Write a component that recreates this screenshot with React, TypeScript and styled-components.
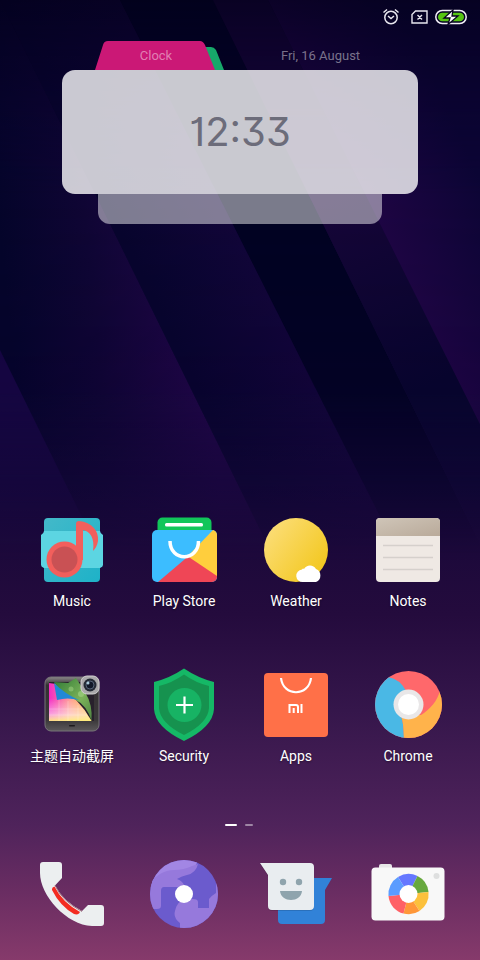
import React from "react";
import styled, { createGlobalStyle } from "styled-components";

const GlobalStyle = createGlobalStyle`
  *, *::before, *::after { box-sizing: border-box; }
  body { margin: 0; background: #05021f; font-family: Roboto, "Noto Sans CJK SC", sans-serif; }
  button { margin: 0; padding: 0; border: 0; background: none; color: inherit; font: inherit; cursor: pointer; }
`;

const Screen = styled.div`
  position: relative;
  isolation: isolate;
  display: flex;
  flex-direction: column;
  min-height: 100vh;
  overflow: hidden;
  color: #fff;
`;

const WallpaperArt = styled.svg`
  position: absolute;
  inset: 0;
  z-index: -1;
  width: 100%;
  height: 100%;
`;

const StatusBar = styled.header`
  display: flex;
  align-items: center;
  justify-content: flex-end;
  gap: 7px;
  height: 33px;
  padding: 0 13px;
  svg { display: block; }
`;

const Widget = styled.section`
  display: flex;
  flex-direction: column;
  padding: 8px 62px 0;
`;

const Tabs = styled.div`
  display: flex;
  height: 29px;
  padding: 0 32px;
`;

const ClockTab = styled.button`
  position: relative;
  isolation: isolate;
  width: 130px;
  padding-right: 6px;
  color: rgba(255, 255, 255, 0.45);
  font-size: 13px;
  svg { position: absolute; inset: 0; z-index: -1; }
`;

const DateLabel = styled.div`
  flex: 1;
  align-self: center;
  padding-left: 31px;
  text-align: center;
  white-space: nowrap;
  font-size: 13px;
  color: rgba(255, 255, 255, 0.45);
`;

const ClockCard = styled.div`
  display: grid;
  place-items: center;
  height: 124px;
  border-radius: 13px;
  background: rgba(255, 255, 255, 0.79);
`;

const Time = styled.time`
  color: #6c6c7a;
  font-family: Inter, sans-serif;
  font-size: 40px;
  line-height: 48px;
  font-feature-settings: "cv09", "cv01";
`;

const CardShelf = styled.div`
  height: 30px;
  margin: 0 36px;
  border-radius: 0 0 12px 12px;
  background: rgba(255, 255, 255, 0.48);
`;

const AppGrid = styled.main`
  display: grid;
  grid-template-columns: repeat(4, 1fr);
  row-gap: 52px;
  margin-top: auto;
  padding: 0 16px;
`;

const AppButton = styled.button`
  display: flex;
  flex-direction: column;
  align-items: center;
  gap: 1px;
  svg { display: block; overflow: visible; }
`;

const AppLabel = styled.span`
  height: 22px;
  line-height: 20px;
  font-size: 14px;
  white-space: nowrap;
  text-shadow: 0 1px 2px rgba(0, 0, 0, 0.4);
`;

const Pager = styled.nav`
  display: flex;
  justify-content: center;
  align-items: center;
  gap: 8px;
  height: 10px;
  margin-top: 52px;
  padding-right: 2px;
`;

const PageMark = styled.button<{ $active?: boolean }>`
  width: ${(p) => (p.$active ? 12 : 8)}px;
  height: 2px;
  border-radius: 1px;
  background: ${(p) => (p.$active ? "#fff" : "rgba(255,255,255,0.45)")};
`;

const Dock = styled.footer`
  display: grid;
  grid-template-columns: repeat(4, 1fr);
  padding: 24px 16px 26px;
`;

const Wallpaper = () => (
  <WallpaperArt viewBox="0 0 480 960" preserveAspectRatio="none" aria-hidden="true">
    <defs>
      <linearGradient id="sky" x1="0" y1="0" x2="0" y2="1">
        <stop offset="0" stopColor="#03001b" />
        <stop offset="0.2" stopColor="#0a0330" />
        <stop offset="0.5" stopColor="#140738" />
        <stop offset="0.64" stopColor="#240b3d" />
        <stop offset="0.74" stopColor="#35164b" />
        <stop offset="0.86" stopColor="#4f235b" />
        <stop offset="0.93" stopColor="#6a2d62" />
        <stop offset="1" stopColor="#863a6b" />
      </linearGradient>
      <linearGradient id="fade" x1="0" y1="0" x2="0" y2="1">
        <stop offset="0" stopColor="#fff" stopOpacity="0.3" />
        <stop offset="0.35" stopColor="#fff" />
        <stop offset="0.7" stopColor="#fff" stopOpacity="0.85" />
        <stop offset="1" stopColor="#fff" stopOpacity="0" />
      </linearGradient>
      <linearGradient id="violet" gradientUnits="userSpaceOnUse" x1="10" y1="330" x2="200" y2="310">
        <stop offset="0" stopColor="#04042a" />
        <stop offset="0.45" stopColor="#0f0534" />
        <stop offset="1" stopColor="#210648" />
      </linearGradient>
      <linearGradient id="indigo" gradientUnits="userSpaceOnUse" x1="170" y1="330" x2="270" y2="280">
        <stop offset="0" stopColor="#07042d" />
        <stop offset="1" stopColor="#120539" />
      </linearGradient>
      <linearGradient id="narrow" gradientUnits="userSpaceOnUse" x1="300" y1="200" x2="400" y2="400">
        <stop offset="0" stopColor="#180539" />
        <stop offset="1" stopColor="#06052c" />
      </linearGradient>
      <linearGradient id="edge" gradientUnits="userSpaceOnUse" x1="370" y1="230" x2="480" y2="180">
        <stop offset="0" stopColor="#200545" />
        <stop offset="1" stopColor="#0c0535" />
      </linearGradient>
      <mask id="rays"><rect width="480" height="560" fill="url(#fade)" /></mask>
    </defs>
    <rect width="480" height="960" fill="url(#sky)" />
    <g mask="url(#rays)">
      <path d="M0 0L275 560H0z" fill="url(#violet)" />
      <path d="M0 350L103 560H0z" fill="#160643" />
      <path d="M0 0H120L402 560H275z" fill="url(#indigo)" />
      <path d="M120 0H213L488 560H402z" fill="#010222" />
      <path d="M213 0H268L480 424V560H488z" fill="url(#narrow)" />
      <path d="M268 0H480V424z" fill="url(#edge)" />
    </g>
  </WallpaperArt>
);

const Svg = ({ children }: { children: React.ReactNode }) => (
  <svg width="80" height="80" viewBox="0 0 80 80" aria-hidden="true">{children}</svg>
);

const MusicIcon = () => (
  <Svg>
    <defs><linearGradient id="mu" x2="1" y2="1"><stop stopColor="#43b9c9" /><stop offset="1" stopColor="#1eb2c8" /></linearGradient></defs>
    <rect x="12" y="8" width="56" height="64" rx="4" fill="url(#mu)" />
    <path d="M12 21H68Q68 23 71 25V55Q71 57 68 58H12Q9 57 9 55V25Q12 23 12 21z" fill="#5cd5e2" />
    <circle cx="32.500" cy="49.500" r="18" fill="#f25f5c" />
    <path d="M44 50V14Q44 11 47 11C60 12 67 21 66 31Q65 37 61 41C63 28 58 21 51 20V50z" fill="#f25f5c" />
    <circle cx="32.500" cy="49.500" r="13" fill="#c95154" />
  </Svg>
);

const PlayIcon = () => (
  <Svg>
    <defs><clipPath id="bag"><rect x="8" y="20" width="65" height="52" rx="5" /></clipPath></defs>
    <rect x="13.500" y="7.500" width="54" height="30" rx="5" fill="#11c65a" />
    <rect x="21" y="13" width="38" height="3.500" rx="1.500" fill="#fff" />
    <g clipPath="url(#bag)">
      <path d="M8 20H73V72H8z" fill="#3cbdff" />
      <path d="M69 20H73V67L43 47z" fill="#ffce3d" />
      <path d="M44 46.500L73 66V72H14z" fill="#ef4656" />
    </g>
    <path d="M26 31C26 52 54.500 52 54.500 31" fill="none" stroke="#fff" strokeWidth="3.500" />
  </Svg>
);

const WeatherIcon = () => (
  <Svg>
    <defs><linearGradient id="sun" x1="0.1" y1="0.2" x2="0.9" y2="0.8"><stop stopColor="#fbdc72" /><stop offset="1" stopColor="#f3c821" /></linearGradient></defs>
    <circle cx="40" cy="40" r="32" fill="url(#sun)" />
    <path d="M47 72A6 6 0 0 1 46 59.500Q47 58 48 59A7 7 0 0 1 60 59A7 7 0 0 1 60 72z" fill="#fff" />
  </Svg>
);

const NotesIcon = () => (
  <Svg>
    <defs>
      <clipPath id="pad"><rect x="8" y="8" width="64" height="64" rx="4" /></clipPath>
      <linearGradient id="nh" x2="1" y2="1"><stop stopColor="#cfc5b8" /><stop offset="1" stopColor="#b9aa9a" /></linearGradient>
    </defs>
    <g clipPath="url(#pad)"><path d="M8 8H72V72H8z" fill="#efe9e4" /><path d="M8 8H72V26H8z" fill="url(#nh)" /></g>
    <path d="M15 35.500H65M15 47.500H65M15 59.500H65" stroke="#d5d0cc" strokeWidth="1.300" />
  </Svg>
);

const ThemeIcon = () => (
  <Svg>
    <defs>
      <linearGradient id="rb" x2="1" y2="0"><stop stopColor="#f32ac5" /><stop offset="0.5" stopColor="#ff9c91" /><stop offset="1" stopColor="#ffc23c" /></linearGradient>
      <linearGradient id="lt" x2="0" y2="1"><stop offset="0.4" stopColor="#fff" stopOpacity="0" /><stop offset="0.8" stopColor="#fff" stopOpacity="0.5" /><stop offset="1" stopColor="#fff27a" stopOpacity="0.9" /></linearGradient>
      <linearGradient id="lf" x1="0" y1="0" x2="1" y2="1"><stop stopColor="#2f7a35" /><stop offset="0.6" stopColor="#7cb35a" /><stop offset="1" stopColor="#4b8140" /></linearGradient>
      <linearGradient id="fr" x2="0" y2="1"><stop stopColor="#8a8788" /><stop offset="0.15" stopColor="#343033" /><stop offset="0.8" stopColor="#3b383a" /><stop offset="1" stopColor="#5c595b" /></linearGradient>
    </defs>
    <rect x="13" y="12" width="54" height="54" rx="6" fill="url(#fr)" stroke="#777478" />
    <path d="M17 17H62V56H17z" fill="#28212c" />
    <path d="M17 18L24 19Q47 33 59.500 56H17z" fill="url(#rb)" />
    <path d="M17 18L24 19Q47 33 59.500 56H17z" fill="url(#lt)" />
    <path d="M17 44H51M17 50H55M27 34V56M36 36V56M46 40V56" stroke="#fff" strokeWidth="0.700" opacity="0.3" />
    <path d="M22 17L36 18L44 13L53 27Q61 40 59.500 56Q55 40 42 34L30 30z" fill="url(#lf)" />
    <path d="M22 18Q33 29 47 35Q35 32 25 35Z" fill="#2188d6" />
    <circle cx="49" cy="29" r="3" fill="#a5d685" opacity="0.6" /><circle cx="39" cy="24" r="2.500" fill="#a5d685" opacity="0.5" />
    <rect x="49" y="11" width="18" height="18" rx="6" fill="#aaa9ab" stroke="#d2d1d2" />
    <circle cx="58" cy="20" r="6.500" fill="#242a35" /><circle cx="58" cy="20" r="4" fill="#111828" stroke="#536175" />
    <circle cx="56" cy="18" r="1.500" fill="#a8c9d8" /><rect x="37" y="60" width="6" height="1.500" rx="0.700" fill="#1d1a1d" />
  </Svg>
);

const SecurityIcon = () => (
  <Svg>
    <path d="M40 3.500Q54 13 70 17V44Q69 62 40 76Q11 62 10 44V17Q26 13 40 3.500z" fill="#15b866" />
    <path d="M40 9.500Q52 18 65 21V43Q64 58 40 70Q16 58 15 43V21Q28 18 40 9.500z" fill="#16924f" />
    <circle cx="40.500" cy="40" r="17" fill="#17b364" />
    <path d="M32 40H49M40.500 31.500V48.500" stroke="#fff" strokeWidth="2.200" />
  </Svg>
);

const AppsIcon = () => (
  <Svg>
    <rect x="8" y="8" width="64" height="64" rx="4" fill="#ff7048" />
    <path d="M25 13C27 32 53 32 55 13" fill="none" stroke="#fff" strokeWidth="2.200" />
    <path d="M33.500 48V40H40Q42 40 42 42V48M37.700 43V48M45.500 39V48" fill="none" stroke="#fff" strokeWidth="2" />
  </Svg>
);

const ChromeIcon = () => (
  <Svg>
    <defs><clipPath id="chr"><circle cx="40.500" cy="39.500" r="33.500" /></clipPath></defs>
    <g clipPath="url(#chr)">
      <path d="M0 0H80V80H0z" fill="#ff686b" />
      <path d="M20 12Q32 14 38 26V50L33.500 52Q36 60 36 80H0V0z" fill="#4ab8e5" />
      <path d="M72 25C70 36 61 45 53 50L40 50L33.500 52Q36 60 36 80H80V25z" fill="#ffb34b" />
    </g>
    <circle cx="40.500" cy="39.500" r="15" fill="#e9e7e8" /><circle cx="40.500" cy="39.500" r="10.500" fill="#fff" />
  </Svg>
);

const PhoneIcon = () => (
  <Svg>
    <path d="M11 8H27Q30 8 30 11V24L23 31.500Q31 47 50 57L56 51H69Q72 51 72 54V69Q72 72 69 72H60C35 71 8 42 8 19V11Q8 8 11 8z" fill="#eceff0" />
    <path d="M23 31.500Q30 47 50 57.500" fill="none" stroke="#9e7281" strokeWidth="1" />
    <path d="M20 35Q20 33 22.500 32.500Q30 48 48 58L47 59.500Q45 61 42 60Q28 52 20 36z" fill="#f32c21" />
  </Svg>
);

const BrowserIcon = () => (
  <Svg>
    <defs><clipPath id="glb"><circle cx="40" cy="40" r="34" /></clipPath></defs>
    <g clipPath="url(#glb)">
      <path d="M0 0H80V80H0z" fill="#6b5bcd" />
      <path d="M54 5Q53 14 42 17Q27 18 18 24L7 32V0H54z" fill="#a286e4" />
      <path d="M0 31L16 20Q23 16 30 16Q40 16 48 12L54 10Q52 19 43 21Q38 22 33 25Q39 27 41 33H20Q17 33 17 37V52Q17 55 13 55H0z" fill="#9679dc" />
      <path d="M72 20V39Q67 42 65 45V54H54V48Q54 45 49 45Q34 43 31 57Q29 64 36 69V80H80V20z" fill="#9679dc" />
    </g>
    <circle cx="40" cy="40" r="9" fill="#fff" />
  </Svg>
);

const MessagesIcon = () => (
  <Svg>
    <path d="M22 24H76L69 36V66Q69 70 65 70H26Q22 70 22 66z" fill="#3182d8" />
    <path d="M4 10H54Q58 10 58 14V53Q58 57 54 57H16Q12 57 12 53V22z" fill="#0002" />
    <path d="M4 9H54Q58 9 58 13V52Q58 56 54 56H16Q12 56 12 52V21z" fill="#e9edf0" />
    <circle cx="27" cy="28" r="3.200" fill="#8fa4ad" /><circle cx="43" cy="28" r="3.200" fill="#8fa4ad" />
    <path d="M24 37H46C45 49 25 49 24 37z" fill="#8fa4ad" />
  </Svg>
);

const CameraIcon = () => (
  <Svg>
    <rect x="11" y="10" width="13" height="8" rx="2" fill="#e8e7e8" />
    <rect x="3.500" y="13.500" width="73" height="53" rx="4" fill="#f8f8f8" />
    <circle cx="68.500" cy="22" r="3" fill="#dedfdf" />
    <g transform="translate(40.500 40)">
      <path d="M0 0L-10.500-17A20 20 0 0 1 9-18z" fill="#6577ff" />
      <path d="M0 0L9-18A20 20 0 0 1 20-2z" fill="#67a83e" />
      <path d="M0 0L20-2A20 20 0 0 1 11 17z" fill="#fcc13c" />
      <path d="M0 0L11 17A20 20 0 0 1-5 19.500z" fill="#ff9739" />
      <path d="M0 0L-5 19.500A20 20 0 0 1-20 2z" fill="#ff6166" />
      <path d="M0 0L-20 2A20 20 0 0 1-10.500-17z" fill="#5b9cff" />
      <circle r="9" fill="#fff" />
    </g>
  </Svg>
);

const apps = [
  { name: "Music", Icon: MusicIcon },
  { name: "Play Store", Icon: PlayIcon },
  { name: "Weather", Icon: WeatherIcon },
  { name: "Notes", Icon: NotesIcon },
  { name: "主题自动截屏", Icon: ThemeIcon },
  { name: "Security", Icon: SecurityIcon },
  { name: "Apps", Icon: AppsIcon },
  { name: "Chrome", Icon: ChromeIcon },
];

const dockApps = [
  { name: "Phone", Icon: PhoneIcon },
  { name: "Browser", Icon: BrowserIcon },
  { name: "Messages", Icon: MessagesIcon },
  { name: "Camera", Icon: CameraIcon },
];

export default function App() {
  return (
    <>
      <GlobalStyle />
      <Screen>
        <Wallpaper />
        <StatusBar>
          <svg width="20" height="18" viewBox="0 0 20 18" fill="none" stroke="#e8e7ef" strokeWidth="1.500" aria-hidden="true">
            <circle cx="10" cy="9.500" r="6.200" /><path d="M2.500 4.500L6 1.500M17.500 4.500L14 1.500M7 8L10 10.500L13 8" />
          </svg>
          <svg width="20" height="14" viewBox="0 0 20 14" fill="none" stroke="#e8e7ef" strokeWidth="1.400" aria-hidden="true">
            <path d="M7.500 1H19V13H4V4.500zM9.500 5L14 9.500M14 5L9.500 9.500" />
          </svg>
          <svg width="32" height="16" viewBox="0 0 32 16" aria-hidden="true">
            <rect x="0.800" y="1.500" width="30.400" height="13" rx="6.500" fill="none" stroke="#f2eff7" strokeWidth="1.500" />
            <rect x="3" y="3.700" width="26" height="8.600" rx="4.300" fill="#56c512" />
            <path d="M18 1L9 9H15L13 15.500L23 7H17z" fill="#fff" stroke="#08031f" strokeWidth="1.300" />
          </svg>
        </StatusBar>
        <Widget>
          <Tabs>
            <ClockTab>
              <svg width="130" height="29" viewBox="0 0 130 29" aria-hidden="true">
                <path d="M105 6H117Q120 6 122 9L130 29H110z" fill="#17a86a" />
                <path d="M1 29L9 4Q10 0 14 0H106Q109 0 111 4L121 29z" fill="#cb1876" />
              </svg>
              Clock
            </ClockTab>
            <DateLabel>Fri, 16 August</DateLabel>
          </Tabs>
          <ClockCard><Time>12:33</Time></ClockCard>
          <CardShelf />
        </Widget>
        <AppGrid>
          {apps.map(({ name, Icon }) => (
            <AppButton key={name}><Icon /><AppLabel>{name}</AppLabel></AppButton>
          ))}
        </AppGrid>
        <Pager aria-label="Home screens">
          <PageMark $active aria-label="Screen 1" />
          <PageMark aria-label="Screen 2" />
        </Pager>
        <Dock>
          {dockApps.map(({ name, Icon }) => (
            <AppButton key={name} aria-label={name}><Icon /></AppButton>
          ))}
        </Dock>
      </Screen>
    </>
  );
}
